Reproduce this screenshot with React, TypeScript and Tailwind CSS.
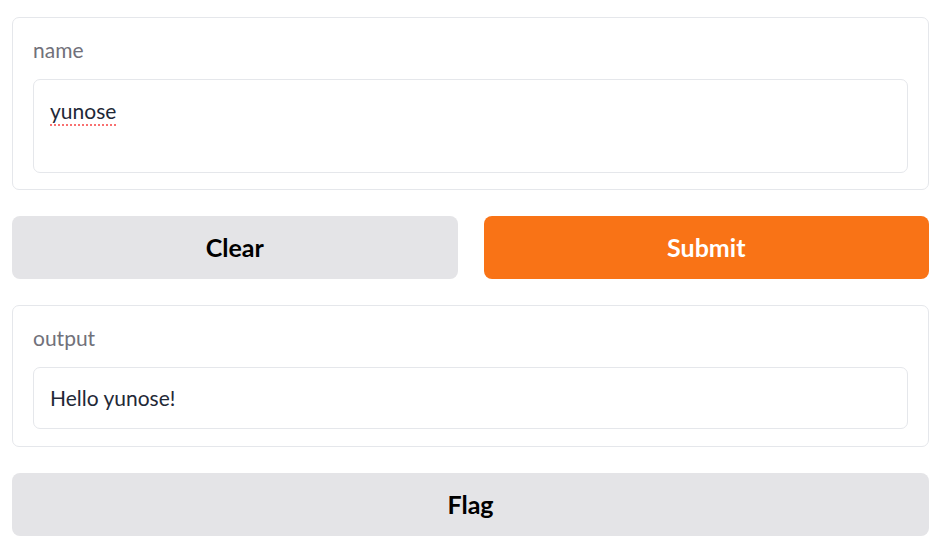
export default function App() {
  return (
    <div
      className="w-[942px] h-[558px] bg-white pl-[12px] pr-[13px] pt-[17px] flex flex-col gap-[26px]"
      style={{ fontFamily: '"Lato", "Noto Sans", sans-serif' }}
    >
      {/* input card */}
      <div className="border border-[#e5e7eb] rounded-[7px] px-[20px] pt-[18px] pb-[16px]">
        <div className="text-[21px] leading-[27px] text-[#71717a] mb-[16px]">name</div>
        <div className="h-[94px] border border-[#e5e7eb] rounded-[7px] px-[16px] pt-[17px]">
          <span className="text-[21px] leading-[27px] text-[#1f2937] underline decoration-dotted decoration-[#f87171] decoration-2 underline-offset-[5px]">
            yunose
          </span>
        </div>
      </div>

      <div className="flex gap-[26px]">
        <button className="flex-1 h-[63px] rounded-[8px] bg-[#e4e4e7] text-[25px] font-bold text-black">
          Clear
        </button>
        <button className="flex-1 h-[63px] rounded-[8px] bg-[#f97316] text-[25px] font-bold text-white">
          Submit
        </button>
      </div>

      {/* output card */}
      <div className="border border-[#e5e7eb] rounded-[7px] px-[20px] pt-[18px] pb-[17px]">
        <div className="text-[21px] leading-[27px] text-[#71717a] mb-[16px]">output</div>
        <div className="h-[62px] border border-[#e5e7eb] rounded-[7px] px-[16px] pb-[2px] flex items-center">
          <span className="text-[21px] leading-[27px] text-[#1f2937]">Hello yunose!</span>
        </div>
      </div>

      <button className="h-[63px] rounded-[8px] bg-[#e4e4e7] text-[25px] font-bold text-black">
        Flag
      </button>
    </div>
  )
}
